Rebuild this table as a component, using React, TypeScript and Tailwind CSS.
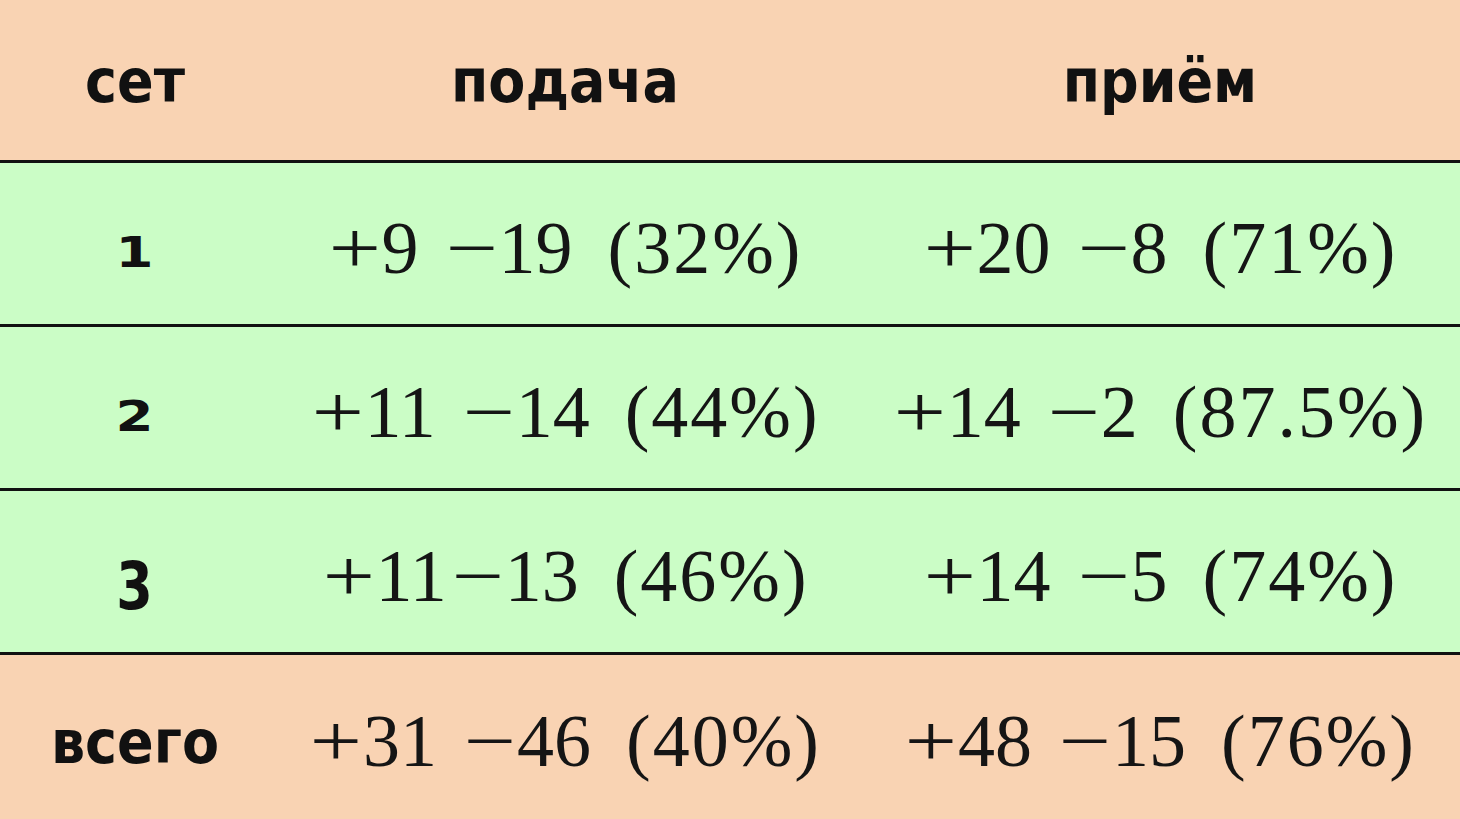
import React from "react";

const PEACH = "bg-[#f9d3b3]";
const GREEN = "bg-[#cbfdc6]";

const sans = "font-['DejaVu_Sans_Condensed','DejaVu_Sans',sans-serif] font-bold font-stretch-condensed text-[#111]";
const digit = "font-['DejaVu_Sans',sans-serif] font-bold text-[#111] text-[42px] leading-none inline-block";
const serif = "font-['Liberation_Serif',serif] text-[74px] text-[#151515] leading-none";

type Cell = { p: string; m: string; pct: string; tight?: boolean };

function Op({ c, left }: { c: string; left?: string }) {
  return (
    <span className={`inline-block w-[54px] text-center ${left ?? ""}`}>
      <span className="inline-block scale-x-[1.25]">{c}</span>
    </span>
  );
}

function Math({ p, m, pct, tight }: Cell) {
  return (
    <div className={`flex items-baseline justify-center mt-[8px] ${serif}`}>
      <Op c="+" />
      <span>{p}</span>
      <Op c="−" left={tight ? "ml-[4px]" : "ml-[26px]"} />
      <span>{m}</span>
      <span className="ml-[35px] tracking-[2px]">{pct}</span>
    </div>
  );
}

function Row({
  bg,
  first,
  top,
  c2,
  c3,
  h,
}: {
  bg: string;
  first: React.ReactNode;
  top?: boolean;
  c2: React.ReactNode;
  c3: React.ReactNode;
  h: string;
}) {
  return (
    <div className={`grid grid-cols-[270px_590px_600px] ${bg} ${h} ${top ? "" : "border-t-[3px] border-[#111]"}`}>
      <div className="flex items-center justify-center">{first}</div>
      <div className="flex items-center justify-center">{c2}</div>
      <div className="flex items-center justify-center">{c3}</div>
    </div>
  );
}

export default function App() {
  return (
    <div className="w-[1460px] h-[819px] overflow-hidden flex flex-col">
      <Row
        bg={PEACH}
        top
        h="h-[160px]"
        first={<span className={`${sans} text-[60px] leading-none mt-[2px]`}>сет</span>}
        c2={<span className={`${sans} text-[60px] leading-none mt-[2px]`}>подача</span>}
        c3={<span className={`${sans} text-[60px] leading-none mt-[2px]`}>приём</span>}
      />
      <Row
        bg={GREEN}
        h="h-[164px]"
        first={<span className={`${digit} scale-x-[1.3] mt-[18px]`}>1</span>}
        c2={<Math p="9" m="19" pct="(32%)" />}
        c3={<Math p="20" m="8" pct="(71%)" />}
      />
      <Row
        bg={GREEN}
        h="h-[164px]"
        first={<span className={`${digit} scale-x-[1.3] mt-[18px]`}>2</span>}
        c2={<Math p="11" m="14" pct="(44%)" />}
        c3={<Math p="14" m="2" pct="(87.5%)" />}
      />
      <Row
        bg={GREEN}
        h="h-[164px]"
        first={<span className={`${digit} scale-x-[1.25] scale-y-[1.55] mt-[30px]`}>3</span>}
        c2={<Math p="11" m="13" pct="(46%)" tight />}
        c3={<Math p="14" m="5" pct="(74%)" />}
      />
      <Row
        bg={PEACH}
        h="flex-1"
        first={<span className={`${sans} text-[60px] leading-none mt-[10px]`}>всего</span>}
        c2={<Math p="31" m="46" pct="(40%)" />}
        c3={<Math p="48" m="15" pct="(76%)" />}
      />
    </div>
  );
}
